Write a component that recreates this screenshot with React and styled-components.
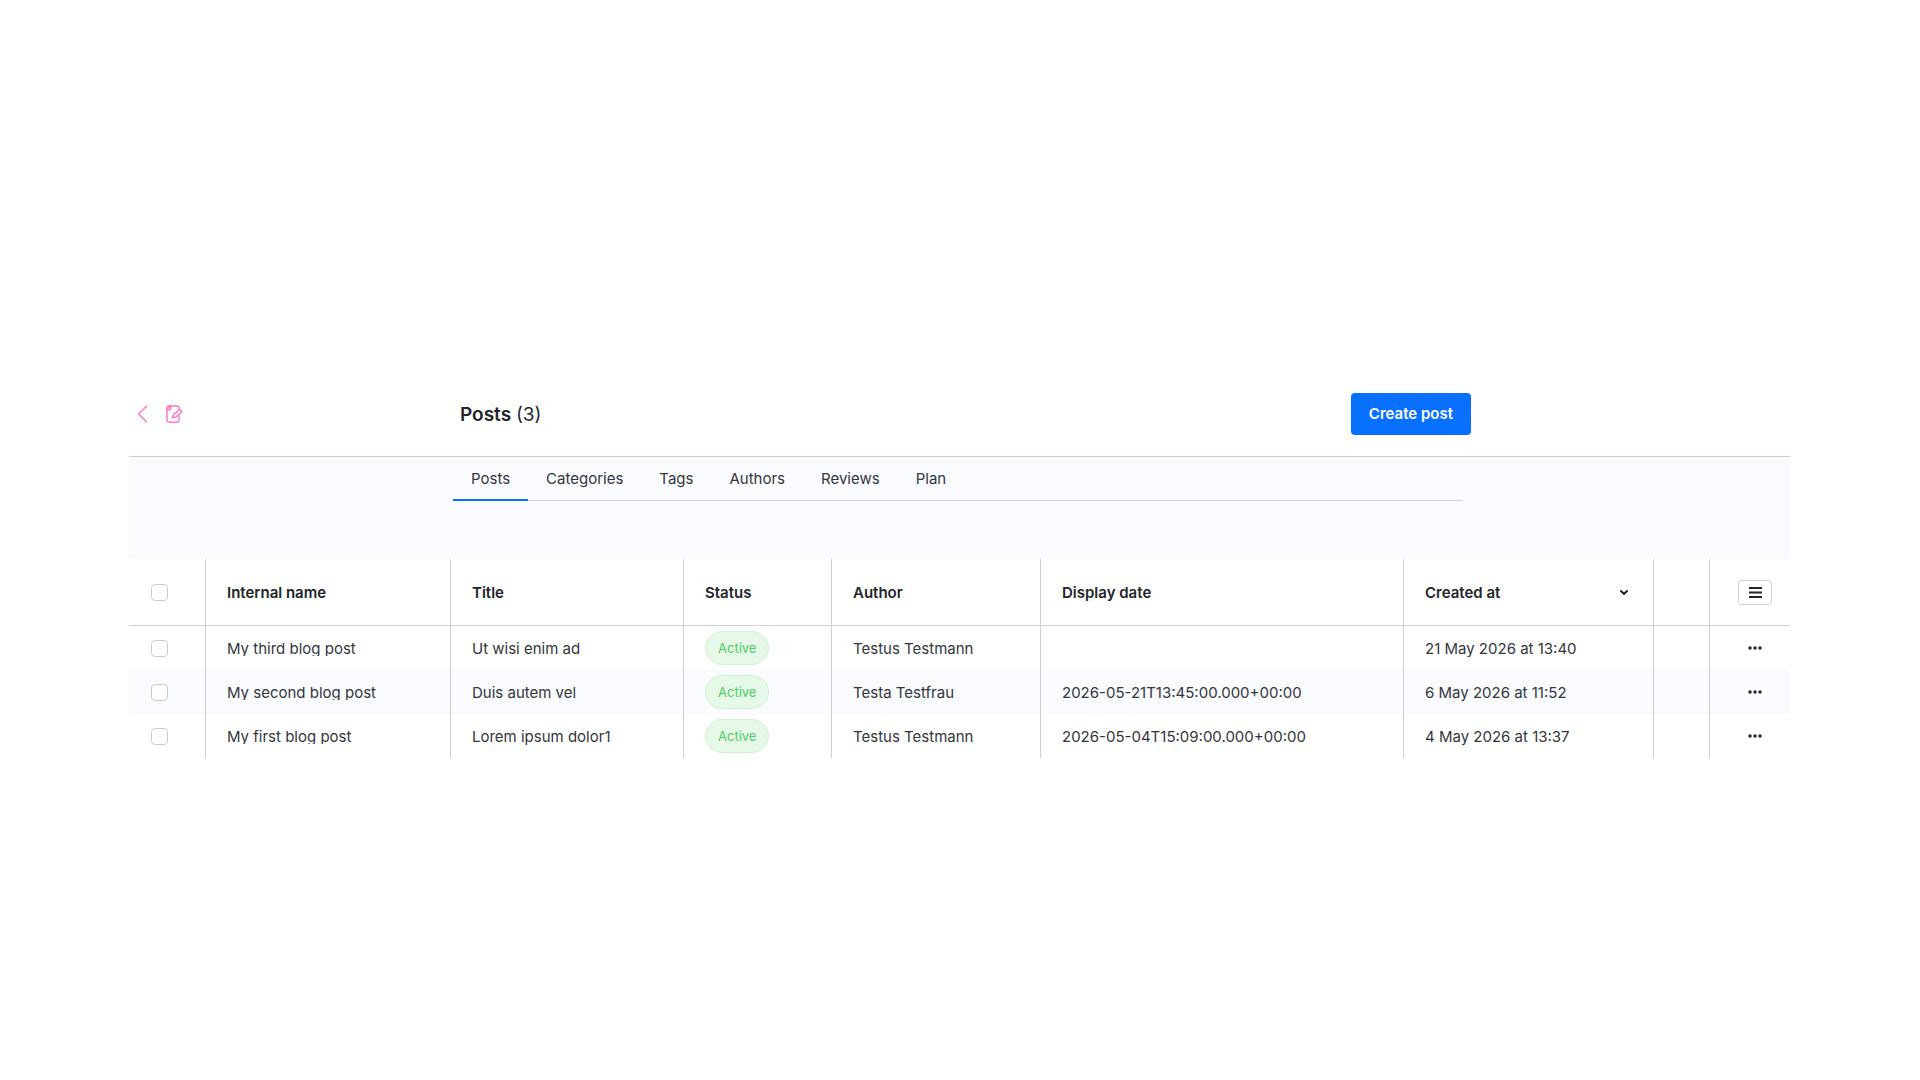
import React from "react";
import styled, { createGlobalStyle } from "styled-components";

const GlobalStyle = createGlobalStyle`
  *, *::before, *::after { box-sizing: border-box; }
  body {
    margin: 0;
    background: #fff;
    color: #33363d;
    font-family: Inter, "Liberation Sans", sans-serif;
    font-size: 15px;
    line-height: 20px;
  }
  button, input { font: inherit; color: inherit; }
`;

const Page = styled.main`
  min-height: 100vh;
  padding: 0 130px 1px 129px;
  display: flex;
  flex-direction: column;
  justify-content: center;
`;

const Header = styled.header`
  display: grid;
  grid-template-columns: 324px minmax(0, 1018px);
  align-items: center;
  padding: 72px 0 21px;
  border-bottom: 1px solid #cbcfd5;
`;

const ModuleNav = styled.nav`
  display: flex;
  align-items: center;
  gap: 18px;
  padding-left: 8px;
`;

const IconLink = styled.a`
  display: flex;
  color: #ff7abd;
`;

const HeaderBody = styled.div`
  display: flex;
  align-items: center;
  justify-content: space-between;
  padding-left: 7px;
`;

const Heading = styled.h1`
  margin: 0;
  padding-top: 2px;
  font-size: 19px;
  line-height: 24px;
  font-weight: 600;
  color: #22252b;
`;

const Count = styled.span`
  font-weight: 400;
`;

const PrimaryButton = styled.button`
  height: 42px;
  padding: 0 18px;
  border: 0;
  border-radius: 4px;
  background: #0870ff;
  color: #fff;
  font-weight: 600;
  white-space: nowrap;
`;

const TabArea = styled.section`
  padding: 0 0 58px 324px;
  background: #fafbff;
`;

const Tabs = styled.nav`
  display: flex;
  max-width: 1010px;
  box-shadow: inset 0 -1px #cdd0d6;
`;

const Tab = styled.a`
  padding: 12px 18px 10px;
  border-bottom: 2px solid ${(p) => (p.$active ? "#0870ff" : "transparent")};
  color: inherit;
  text-decoration: none;
`;

const Table = styled.table`
  width: 100%;
  table-layout: fixed;
  border-spacing: 0;
`;

const Column = styled.col`
  width: ${(p) => p.$width}px;
`;

const Cell = styled.td`
  height: 44px;
  padding: ${(p) => (p.$text ? 2 : 0)}px 21px 0;
  border-right: 1px solid #cfd0d7;
  text-align: left;
  white-space: nowrap;

  &:last-child {
    border-right: 0;
    padding-left: 27px;
    padding-right: 17px;
  }
`;

const HeadCell = styled(Cell)`
  height: 67px;
  border-bottom: 1px solid #cfd0d7;
  font-weight: 600;
  color: #22252b;
`;

const Row = styled.tr`
  &:nth-child(even) { background: #fafbff; }
`;

const HeadContent = styled.div`
  display: flex;
  align-items: center;
  justify-content: space-between;
  padding-right: 3px;
`;

const Checkbox = styled.input`
  appearance: none;
  display: block;
  width: 17px;
  height: 17px;
  margin: 0 1px;
  border: 1px solid #c8c9d1;
  border-radius: 4px;
  background: #fff;

  &:checked { background: #0870ff; }
`;

const NameLink = styled.a`
  display: block;
  overflow: hidden;
  line-height: 14px;
  color: inherit;
  text-decoration: none;
`;

const Badge = styled.span`
  display: block;
  width: fit-content;
  padding: 0 12px;
  border: 1px solid #cdf3d0;
  border-radius: 17px;
  background: #e6f8e8;
  color: #4fcf5f;
  font-size: 13px;
  line-height: 32px;
`;

const ListButton = styled.button`
  display: flex;
  align-items: center;
  justify-content: center;
  width: 34px;
  height: 25px;
  margin: 0 auto;
  padding: 0;
  border: 1px solid #cfd0d7;
  border-radius: 4px;
  background: #fff;
`;

const MenuButton = styled.button`
  display: flex;
  align-items: center;
  justify-content: center;
  width: 34px;
  height: 24px;
  margin: 0 auto;
  padding: 0;
  border: 0;
  background: none;
  color: #22252b;
`;

const BackIcon = () => (
  <svg width="11" height="18" viewBox="0 0 11 18" fill="none" stroke="currentColor" strokeWidth="1.5" strokeLinecap="round" strokeLinejoin="round">
    <path d="M9.5 1.2 1.7 9l7.8 7.8" />
  </svg>
);

const NotepadIcon = () => (
  <svg width="17" height="18" viewBox="0 0 17 18" fill="none" stroke="currentColor" strokeWidth="1.5" strokeLinecap="round" strokeLinejoin="round">
    <path d="M13 3.500V2.500A1.600 1.600 0 0 0 11.400 .9H4L1 4v11.600A1.600 1.600 0 0 0 2.600 17.200H11.400a1.600 1.600 0 0 0 1.600-1.600v-4.600" />
    <path d="M1 4V2.500A1.600 1.600 0 0 1 2.600 .9H4" />
    <path d="M4.600 1v2.600a1.200 1.200 0 0 1-1.200 1.200H1.200" />
    <path d="m6.600 12.700.6-2.900L13.800 4.400l2.200 2.200-6.300 5.700z" />
  </svg>
);

const ChevronIcon = () => (
  <svg width="10" height="10" viewBox="0 0 10 10" fill="none" stroke="currentColor" strokeWidth="2" strokeLinecap="round" strokeLinejoin="round">
    <path d="m2 3 3 3 3-3" />
  </svg>
);

const ListIcon = () => (
  <svg width="13" height="12" viewBox="0 0 13 12" fill="none" stroke="#22252b" strokeWidth="2">
    <path d="M0 2h13M0 6.500h13M0 11h13" />
  </svg>
);

const DotsIcon = () => (
  <svg width="14" height="4" viewBox="0 0 14 4" fill="currentColor">
    <circle cx="2" cy="2" r="1.700" />
    <circle cx="7" cy="2" r="1.700" />
    <circle cx="12" cy="2" r="1.700" />
  </svg>
);

const tabs = ["Posts", "Categories", "Tags", "Authors", "Reviews", "Plan"];
const widths = [77, 245, 233, 148, 209, 363, 250, 56, 80];
const posts = [
  { name: "My third blog post", title: "Ut wisi enim ad", author: "Testus Testmann", display: "", created: "21 May 2026 at 13:40" },
  { name: "My second blog post", title: "Duis autem vel", author: "Testa Testfrau", display: "2026-05-21T13:45:00.000+00:00", created: "6 May 2026 at 11:52" },
  { name: "My first blog post", title: "Lorem ipsum dolor1", author: "Testus Testmann", display: "2026-05-04T15:09:00.000+00:00", created: "4 May 2026 at 13:37" },
];

export default function App() {
  return (
    <>
      <GlobalStyle />
      <Page>
        <Header>
          <ModuleNav>
            <IconLink href="#back" aria-label="Back"><BackIcon /></IconLink>
            <IconLink href="#blog" aria-label="Blog"><NotepadIcon /></IconLink>
          </ModuleNav>
          <HeaderBody>
            <Heading>Posts <Count>(3)</Count></Heading>
            <PrimaryButton type="button">Create post</PrimaryButton>
          </HeaderBody>
        </Header>
        <TabArea>
          <Tabs>
            {tabs.map((tab, i) => (
              <Tab key={tab} href={`#${tab.toLowerCase()}`} $active={i === 0}>{tab}</Tab>
            ))}
          </Tabs>
        </TabArea>
        <Table>
          <colgroup>
            {widths.map((width, i) => <Column key={i} $width={width} />)}
          </colgroup>
          <thead>
            <tr>
              <HeadCell as="th"><Checkbox type="checkbox" aria-label="Select all posts" /></HeadCell>
              <HeadCell as="th" $text>Internal name</HeadCell>
              <HeadCell as="th" $text>Title</HeadCell>
              <HeadCell as="th" $text>Status</HeadCell>
              <HeadCell as="th" $text>Author</HeadCell>
              <HeadCell as="th" $text>Display date</HeadCell>
              <HeadCell as="th" $text><HeadContent>Created at<ChevronIcon /></HeadContent></HeadCell>
              <HeadCell as="th" />
              <HeadCell as="th"><ListButton type="button" aria-label="List settings"><ListIcon /></ListButton></HeadCell>
            </tr>
          </thead>
          <tbody>
            {posts.map((post) => (
              <Row key={post.name}>
                <Cell><Checkbox type="checkbox" aria-label={`Select ${post.name}`} /></Cell>
                <Cell $text><NameLink href="#post">{post.name}</NameLink></Cell>
                <Cell $text>{post.title}</Cell>
                <Cell><Badge>Active</Badge></Cell>
                <Cell $text>{post.author}</Cell>
                <Cell $text>{post.display}</Cell>
                <Cell $text>{post.created}</Cell>
                <Cell />
                <Cell><MenuButton type="button" aria-label={`Actions for ${post.name}`}><DotsIcon /></MenuButton></Cell>
              </Row>
            ))}
          </tbody>
        </Table>
      </Page>
    </>
  );
}
